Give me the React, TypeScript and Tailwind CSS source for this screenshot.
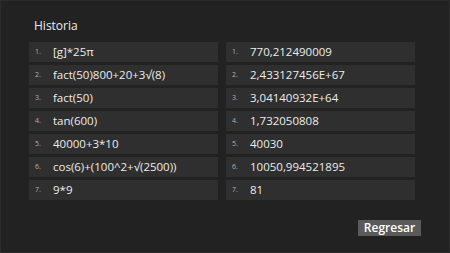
const LEFT = [
  "[g]*25π",
  "fact(50)800+20+3√(8)",
  "fact(50)",
  "tan(600)",
  "40000+3*10",
  "cos(6)+(100^2+√(2500))",
  "9*9",
];

const RIGHT = [
  "770,212490009",
  "2,433127456E+67",
  "3,04140932E+64",
  "1,732050808",
  "40030",
  "10050,994521895",
  "81",
];

function Row({ n, text }: { n: number; text: string }) {
  return (
    <div className="flex h-[20px] w-[189px] items-center bg-[#2f2f2f]">
      <span className="w-[24px] pl-[6px] text-[7px] text-[#b0b0b0]">{n}.</span>
      <span className="text-[11.5px] leading-none text-[#ececec]">{text}</span>
    </div>
  );
}

export default function App() {
  return (
    <div
      className="flex h-[253px] w-[450px] flex-col border border-[#2c2c2c] bg-[#222222]"
      style={{ fontFamily: '"Open Sans", "Noto Sans", sans-serif' }}
    >
      <div className="pl-[33px] pt-[17px] text-[12px] leading-[16px] text-[#ececec]">Historia</div>
      <div className="mt-[8px] flex gap-[8px] pl-[28px]">
        <div className="flex flex-col gap-[3px]">
          {LEFT.map((t, i) => (
            <Row key={i} n={i + 1} text={t} />
          ))}
        </div>
        <div className="flex flex-col gap-[3px]">
          {RIGHT.map((t, i) => (
            <Row key={i} n={i + 1} text={t} />
          ))}
        </div>
      </div>
      <div className="mt-[20px] flex justify-end pr-[28px]">
        <button className="flex h-[16px] w-[63px] items-center justify-center bg-[#5a5a5a] text-[12px] font-semibold leading-none text-white">
          Regresar
        </button>
      </div>
    </div>
  );
}
